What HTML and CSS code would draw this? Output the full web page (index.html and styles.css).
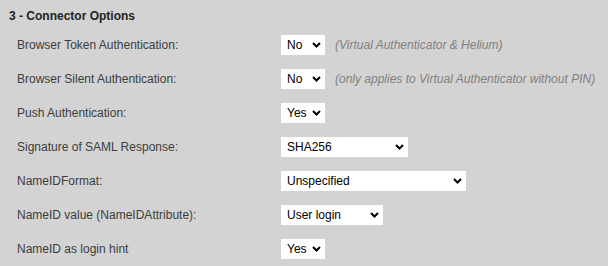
FILE: index.html
```html
<!DOCTYPE html>
<html lang="en">
<head>
    <meta charset="UTF-8">
    <title>Connector Options</title>
    <link rel="stylesheet" href="styles.css">
</head>
<body>
    <div class="section">
        <h3 class="section-title">3 - Connector Options</h3>

        <div class="options">
            <label class="opt-label">Browser Token Authentication:</label>
            <div class="opt-field">
                <select class="opt-select sel-small">
                    <option>No</option>
                    <option>Yes</option>
                </select>
                <span class="opt-hint">(Virtual Authenticator &amp; Helium)</span>
            </div>

            <label class="opt-label">Browser Silent Authentication:</label>
            <div class="opt-field">
                <select class="opt-select sel-small">
                    <option>No</option>
                    <option>Yes</option>
                </select>
                <span class="opt-hint">(only applies to Virtual Authenticator without PIN)</span>
            </div>

            <label class="opt-label">Push Authentication:</label>
            <div class="opt-field">
                <select class="opt-select sel-small">
                    <option>Yes</option>
                    <option>No</option>
                </select>
            </div>

            <label class="opt-label">Signature of SAML Response:</label>
            <div class="opt-field">
                <select class="opt-select sel-sha">
                    <option>SHA256</option>
                    <option>SHA1</option>
                </select>
            </div>

            <label class="opt-label">NameIDFormat:</label>
            <div class="opt-field">
                <select class="opt-select sel-format">
                    <option>Unspecified</option>
                    <option>Email address</option>
                    <option>Persistent</option>
                    <option>Transient</option>
                </select>
            </div>

            <label class="opt-label">NameID value (NameIDAttribute):</label>
            <div class="opt-field">
                <select class="opt-select sel-value">
                    <option>User login</option>
                    <option>Email</option>
                </select>
            </div>

            <label class="opt-label">NameID as login hint</label>
            <div class="opt-field">
                <select class="opt-select sel-small">
                    <option>Yes</option>
                    <option>No</option>
                </select>
            </div>
        </div>
    </div>
</body>
</html>
```

FILE: styles.css
```css
* {
    margin: 0;
    padding: 0;
    box-sizing: border-box;
}
body {
    background: #d3d3d3;
    font-family: 'Liberation Sans', Arial, sans-serif;
    font-size: 12px;
    color: #333;
}
.section {
    padding: 8px 0 0 9px;
}
.section-title {
    font-size: 12px;
    font-weight: 700;
    color: #222;
    line-height: 16px;
    margin-bottom: 4px;
}
.options {
    display: grid;
    grid-template-columns: 264px 1fr;
    grid-auto-rows: 34px;
    align-items: center;
    padding-left: 8px;
}
.opt-label {
    color: #3c3c3c;
}
.opt-field {
    display: flex;
    align-items: center;
    gap: 10px;
}
.opt-select {
    appearance: none;
    -webkit-appearance: none;
    height: 20px;
    border: none;
    border-radius: 0;
    background-color: #fff;
    background-image: url("data:image/svg+xml,%3Csvg xmlns='http://www.w3.org/2000/svg' width='9' height='6' viewBox='0 0 9 6'%3E%3Cpath d='M1 1l3.5 3.5L8 1' fill='none' stroke='%23000' stroke-width='2'/%3E%3C/svg%3E");
    background-repeat: no-repeat;
    background-position: right 4px center;
    font-family: 'Liberation Sans', Arial, sans-serif;
    font-size: 12px;
    color: #000;
    padding: 0 18px 0 6px;
    outline: none;
}
.sel-small {
    width: 44px;
}
.sel-sha {
    width: 127px;
}
.sel-format {
    width: 185px;
}
.sel-value {
    width: 102px;
}
.opt-hint {
    font-style: italic;
    font-size: 12px;
    color: #808080;
}
```
